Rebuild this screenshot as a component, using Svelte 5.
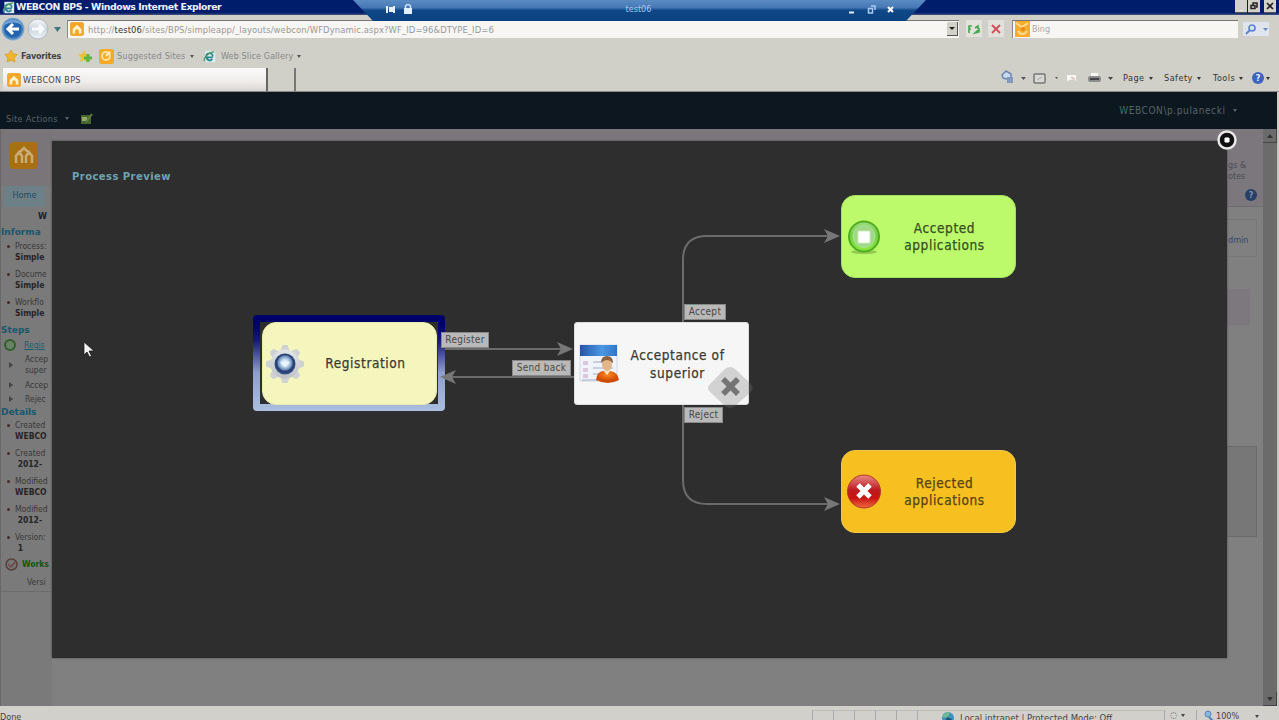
<script>
  const nodes = [
    { id: 'registration', lines: ['Registration'], x: 210, y: 181, type: 'start' },
    { id: 'acceptance', lines: ['Acceptance of', 'superior'], x: 522, y: 181, type: 'task' },
    { id: 'accepted', lines: ['Accepted', 'applications'], x: 789, y: 54, type: 'accepted' },
    { id: 'rejected', lines: ['Rejected', 'applications'], x: 789, y: 309, type: 'rejected' }
  ];

  const edges = [
    'M393 208H512',
    'M522 236H400',
    'M631 181V119Q631 95 655 95H778',
    'M631 264V339Q631 363 655 363H778'
  ];

  const arrows = [
    { x: 520, y: 208, angle: 0 },
    { x: 389, y: 236, angle: 180 },
    { x: 787, y: 95, angle: 0 },
    { x: 787, y: 363, angle: 0 }
  ];

  const labels = [
    { text: 'Register', x: 389, y: 191, w: 48 },
    { text: 'Send back', x: 460, y: 219, w: 59 },
    { text: 'Accept', x: 632, y: 163, w: 42 },
    { text: 'Reject', x: 632, y: 266, w: 39 }
  ];

  const information = [
    ['Process:', 'Simple'],
    ['Docume', 'Simple'],
    ['Workflo', 'Simple']
  ];

  const details = [
    ['Created', 'WEBCO'],
    ['Created', '\u00a02012-'],
    ['Modified', 'WEBCO'],
    ['Modified', '\u00a02012-'],
    ['Version:', '\u00a01']
  ];
</script>

{#snippet feed(size)}
  <svg width={size} height={size} viewBox="0 0 16 16">
    <rect x="0.5" y="0.5" width="15" height="15" rx="2" fill="#f5a623" stroke="#e8a53c" />
    <path d="M3 13V8l5-5 5 5v5h-3V9.500L8 8 6 9.500V13z" fill="#fff0cc" />
  </svg>
{/snippet}

{#snippet ie(size)}
  <svg width={size} height={size} viewBox="0 0 16 16">
    <rect x="3" y="1" width="12" height="14" fill="#dcebee" />
    <path d="M12 9H5a3.500 3.500 0 0 0 6.500 2M12 8a4 4 0 0 0-8 0c0 5 5 6 7 4" fill="none" stroke="#2b8792" stroke-width="2" />
    <path d="M2 14C0 10 6 3 14 2" fill="none" stroke="#4c9a62" stroke-width="1.500" />
  </svg>
{/snippet}

<div class="window">
  <header class="titlebar">
    {@render ie(13)}
    <span class="title">WEBCON BPS - Windows Internet Explorer</span>
    <div class="window-buttons">
      <i>_</i>
      <i><svg width="8" height="8" viewBox="0 0 8 8"><path d="M3 3V1h4v4H6M1 3.500h4v3H1z" fill="none" stroke="#222" stroke-width="1.500" /></svg></i>
      <i><svg width="8" height="8" viewBox="0 0 8 8"><path d="M1 1l6 6M7 1L1 7" stroke="#222" stroke-width="1.700" /></svg></i>
    </div>
  </header>

  <div class="remote-bar">
    <svg class="pin" width="36" height="14" viewBox="0 0 36 14">
      <path d="M5 4v7M8 6h3v3H8zM12 4v7" fill="#fff" stroke="#e4efff" stroke-width="2" />
      <rect x="22" y="6" width="8" height="6" fill="#e2efff" />
      <path d="M23.500 6V4q2.500-3 5 0v2" fill="none" stroke="#cfe2fa" stroke-width="1.500" />
    </svg>
    <span>test06</span>
    <svg class="remote-controls" width="50" height="14" viewBox="0 0 50 14">
      <path d="M3 10.500h5" stroke="#e4efff" stroke-width="2" />
      <path d="M25 4h4v4M22.500 6.500h4V11h-4z" fill="none" stroke="#a9caf0" stroke-width="1.500" />
      <path d="M42 5l5 5M47 5l-5 5" stroke="#fff" stroke-width="2" />
    </svg>
  </div>

  <div class="address-row">
    <svg class="nav" width="66" height="26" viewBox="0 0 66 26">
      <defs>
        <radialGradient id="back"><stop offset="0" stop-color="#1a65b5" /><stop offset=".7" stop-color="#2365ac" /><stop offset="1" stop-color="#8fb5d9" /></radialGradient>
        <linearGradient id="forward" x2="0" y2="1"><stop stop-color="#f7f9fb" /><stop offset=".5" stop-color="#ccd5df" /><stop offset="1" stop-color="#eef4f8" /></linearGradient>
      </defs>
      <circle cx="13" cy="13" r="11.500" fill="url(#back)" />
      <path d="M4 9a10 9 0 0 1 18 0q-8-5-18 0z" fill="#8fbbe2" opacity=".7" />
      <path d="M13 8l-5 5 5 5M8 13h11" fill="none" stroke="#fff" stroke-width="3" />
      <circle cx="38" cy="13" r="10" fill="url(#forward)" stroke="#b4bac2" />
      <path d="M32 13h11M39 9l4 4-4 4" fill="none" stroke="#f8fafb" stroke-width="3" />
      <path d="M54 11h7l-3.500 5z" fill="#417783" />
    </svg>
    <div class="url">
      {@render feed(14)}
      <span class="url-text">http://<b>test06</b>/sites/BPS/simpleapp/_layouts/webcon/WFDynamic.aspx?WF_ID=96&amp;DTYPE_ID=6</span>
      <i class="dropdown"></i>
    </div>
    <div class="tool-button">
      <svg width="14" height="12" viewBox="0 0 14 12"><path d="M2 10V3h3M2 6h2M8 5l3-2v3M12 5v4l-4 1 3-3" fill="none" stroke="#43a84c" stroke-width="1.600" /></svg>
    </div>
    <div class="tool-button stop">
      <svg width="12" height="12" viewBox="0 0 12 12"><path d="M2 2l8 8M10 2l-8 8" stroke="#d54b58" stroke-width="1.800" /></svg>
    </div>
    <div class="search">
      <svg width="15" height="16" viewBox="0 0 15 16"><rect width="15" height="16" fill="#f7ac2c" /><path d="M1 2l6 4 6-4M3 10c2 4 7 4 9 0" fill="none" stroke="#ffdb90" stroke-width="2" /><circle cx="8" cy="8" r="2" fill="#f08513" /></svg>
      <span>Bing</span>
    </div>
    <div class="search-go">
      <svg width="26" height="14" viewBox="0 0 26 14"><circle cx="9" cy="6" r="3" fill="none" stroke="#5c83cf" stroke-width="1.700" /><path d="M7 8l-4 4" stroke="#5c83cf" stroke-width="2" /><path d="M20 6h5l-2.500 3z" fill="#6a86c4" /></svg>
    </div>
  </div>

  <div class="favorites">
    <svg width="14" height="14" viewBox="0 0 14 14"><path d="M7 1l2 4 4 .5-3 3.500 1 4-4-2-4 2 1-4-3-3.500L5 5z" fill="#f3b52d" stroke="#e0a12b" /></svg>
    <strong>Favorites</strong>
    <svg class="add" width="14" height="14" viewBox="0 0 14 14"><path d="M6 1l2 4 4 .5-3 3.500v4L6 11l-4 2 1-4-3-3.500L4 5z" fill="#e9c33c" /><path d="M10 5v8M6 9h8" stroke="#5fb340" stroke-width="3" /></svg>
    <svg class="suggested" width="15" height="15" viewBox="0 0 15 15"><rect width="15" height="15" rx="2" fill="#f7a927" /><circle cx="7" cy="7" r="4" fill="none" stroke="#ffe19c" stroke-width="2" /><path d="M7 7l4-4" stroke="#fff1cc" stroke-width="2" /></svg>
    <span class="suggested-text">Suggested Sites</span>
    <i class="caret"></i>
    <span class="slice-icon">{@render ie(13)}</span>
    <span class="slice-text">Web Slice Gallery</span>
    <i class="caret"></i>
  </div>

  <div class="tab-row">
    <div class="tab">{@render feed(14)}<span>WEBCON BPS</span></div>
    <div class="new-tab"></div>
    <div class="commands">
      <svg width="116" height="18" viewBox="0 0 116 18">
        <path d="M1 6l4-4 5 3v8l-4-3-4-1z" fill="#cad9ef" stroke="#6c88b5" stroke-width="1.500" /><path d="M6 8h6v6H6z" fill="#8298bd" />
        <path d="M20 8h5l-2.500 3zM54 8h3l-1.500 2z" fill="#555" />
        <rect x="33" y="5" width="11" height="9" rx="1" fill="#d8d8d4" stroke="#777" stroke-width="1.500" /><path d="M36 11l5-3" stroke="#aaa" />
        <path d="M66 6h9v6l-3-2-6 2z" fill="#f7f5ef" /><path d="M70 8l4 2" stroke="#c8ad99" />
        <path d="M90 4h7v4h-7z" fill="#f8f8f5" /><rect x="87" y="7" width="13" height="6" rx="2" fill="#8b8e8d" /><path d="M89 10h9" stroke="#444" stroke-width="2" />
        <path d="M107 8h5l-2.500 3z" fill="#444" />
      </svg>
      <span class="page-menu">Page <i class="caret"></i></span>
      <span class="safety-menu">Safety <i class="caret"></i></span>
      <span class="tools-menu">Tools <i class="caret"></i></span>
      <i class="help">?</i><i class="caret help-caret"></i>
    </div>
  </div>

  <div class="ribbon">
    <span class="site-actions">Site Actions <i class="caret"></i></span>
    <svg class="edit" width="13" height="12" viewBox="0 0 13 12"><path d="M1 2h10v9H1z" fill="#46652e" /><path d="M2 4h5v4H2z" fill="#96a96d" /><path d="M6 9l6-8" stroke="#62803b" stroke-width="2" /></svg>
    <span class="user">WEBCON\p.pulanecki <i class="caret"></i></span>
  </div>

  <div class="page">
    <aside>
      <div class="site-logo">
        <svg width="28" height="27" viewBox="0 0 28 27"><rect width="28" height="27" rx="4" fill="#a96f13" /><path d="M6 21v-7l3-4 3 4v7M16 21v-7l3-4 3 4v7M10 10l4-4 4 4" fill="none" stroke="#c8ad74" stroke-width="2.500" /></svg>
      </div>
      <div class="home">Home</div>
      <div class="wf">W</div>
      <h3>Informa</h3>
      <ul>
        {#each information as [name, value]}
          <li>{name}<b>{value}</b></li>
        {/each}
      </ul>
      <h3>Steps</h3>
      <div class="steps">
        <div class="step current"><i></i><span>Regis</span></div>
        <div class="step two-line"><i></i><span>Accep<br />super</span></div>
        <div class="step"><i></i><span>Accep</span></div>
        <div class="step"><i></i><span>Rejec</span></div>
      </div>
      <h3>Details</h3>
      <ul>
        {#each details as [name, value]}
          <li>{name}<b>{value}</b></li>
        {/each}
      </ul>
      <div class="history">
        <svg width="13" height="13" viewBox="0 0 13 13"><circle cx="6.500" cy="6.500" r="5.500" fill="#777" stroke="#583f3d" stroke-width="1.500" /><path d="M3 6l3 3 4-5" fill="none" stroke="#6b4744" stroke-width="1.500" /></svg>
        <b>Works</b>
      </div>
      <div class="version">Versi</div>
    </aside>
    <main>
      <div class="page-top">
        <span>gs &amp;<br />otes</span>
        <i class="help">?</i>
      </div>
      <div class="side-panel admin">dmin</div>
      <div class="side-panel pale"></div>
      <div class="side-panel bottom-panel"></div>
    </main>
    <div class="scrollbar"><i class="up"></i><i class="down"></i></div>
  </div>

  <footer>
    <span class="done">Done</span>
    {#each Array(5) as _}<i class="cell"></i>{/each}
    <div class="zone">
      <svg width="14" height="14" viewBox="0 0 14 14"><circle cx="7" cy="7" r="6" fill="#3b94be" /><path d="M1 6q5-7 8-4L6 7z" fill="#70b995" /><path d="M6 6l5 2-2 5-5-3z" fill="#235777" /></svg>
      <span>Local intranet | Protected Mode: Off</span>
    </div>
    <div class="status-tool">◌ <i class="caret"></i></div>
    <div class="zoom">
      <svg width="12" height="12" viewBox="0 0 12 12"><circle cx="6" cy="4" r="3" fill="#8ab6e3" stroke="#5484bd" /><path d="M7 7l4 4" stroke="#5484bd" stroke-width="2" /></svg>
      <span>100%</span><i class="caret"></i>
    </div>
  </footer>

  <div class="modal">
    <h2>Process Preview</h2>
    <div class="selection"></div>
    <svg class="edges" width="1175" height="517" viewBox="0 0 1175 517">
      {#each edges as d}
        <path {d} fill="none" stroke="#6b6b6b" stroke-width="2" />
      {/each}
      {#each arrows as a}
        <path d="M1 0L-15-7l4 7-4 7z" fill="#777" transform="translate({a.x} {a.y}) rotate({a.angle})" />
      {/each}
    </svg>

    {#each nodes as node (node.id)}
      <div class="node {node.type}" style:left="{node.x}px" style:top="{node.y}px">
        <div class="node-icon">
          {#if node.type === 'start'}
            <svg width="42" height="42" viewBox="0 0 42 42">
              <defs>
                <linearGradient id="gear" x2="0" y2="1"><stop stop-color="#e2e4e6" /><stop offset="1" stop-color="#bfc2c5" /></linearGradient>
                <radialGradient id="hub" cy=".45"><stop offset="0" stop-color="#fff" /><stop offset=".35" stop-color="#c5dcf0" /><stop offset=".65" stop-color="#7090bd" /><stop offset=".8" stop-color="#223c70" /><stop offset="1" stop-color="#354f83" /></radialGradient>
              </defs>
              {#each [0, 45, 90, 135] as angle}
                <path d="M18.500 2h5l3 8v22l-3 8h-5l-3-8V10z" fill="#cfd2d5" transform="rotate({angle} 21 21)" />
              {/each}
              <circle cx="21" cy="21" r="14.500" fill="url(#gear)" />
              <circle cx="21" cy="21" r="10.500" fill="url(#hub)" />
              <path d="M16 19h10l-5 5z" fill="#edf6ff" />
            </svg>
          {:else if node.type === 'task'}
            <svg width="42" height="42" viewBox="0 0 42 42">
              <defs>
                <linearGradient id="bar" x2="1"><stop stop-color="#2455a5" /><stop offset=".6" stop-color="#4d97e4" /><stop offset="1" stop-color="#2f75c6" /></linearGradient>
                <radialGradient id="body" cy=".3"><stop stop-color="#ff8b24" /><stop offset="1" stop-color="#cf4b05" /></radialGradient>
              </defs>
              <rect x="1" y="2" width="37" height="36" fill="#f0f3fa" stroke="#d1d7e3" />
              <rect x="1" y="2" width="37" height="11" fill="url(#bar)" />
              <path d="M14 19h20M14 25h20M14 31h20M3 37h18" stroke="#b9c4d7" stroke-width="1.500" />
              <path d="M4 18h5v4H4zM4 25h5v4H4zM4 31h5v4H4z" fill="#dcc7df" />
              <path d="M17 37q1-9 8-9h6q8 1 9 9-11 6-23 0z" fill="url(#body)" />
              <path d="M24 27l4 5 4-5" fill="#fae5ca" />
              <ellipse cx="28" cy="21" rx="5" ry="7" fill="#e5b58a" />
              <path d="M22 20q0-7 6-7t6 7q-3-3-6-3t-6 3z" fill="#8c6342" />
            </svg>
          {:else if node.type === 'accepted'}
            <svg width="42" height="42" viewBox="0 0 42 42">
              <defs><linearGradient id="green" x2="0" y2="1"><stop stop-color="#9bd982" /><stop offset=".5" stop-color="#75cf44" /><stop offset="1" stop-color="#8beb3d" /></linearGradient></defs>
              <ellipse cx="22" cy="36" rx="13" ry="2" fill="#93c953" />
              <circle cx="22" cy="20.500" r="15" fill="url(#green)" stroke="#51ad20" stroke-width="2" />
              <circle cx="22" cy="20.500" r="11" fill="#a0d78a" stroke="#a6e984" stroke-width="1" />
              <rect x="16" y="15" width="12" height="12" rx="1" fill="#fff" stroke="#c8f1b7" />
            </svg>
          {:else}
            <svg width="42" height="42" viewBox="0 0 42 42">
              <defs><linearGradient id="red" x2="0" y2="1"><stop stop-color="#e88a87" /><stop offset=".45" stop-color="#bd1c20" /><stop offset=".7" stop-color="#c81512" /><stop offset="1" stop-color="#f16b42" /></linearGradient></defs>
              <circle cx="22" cy="20.500" r="16.500" fill="url(#red)" stroke="#b7352a" />
              <path d="M16 14l12 12M28 14L16 26" stroke="#fff" stroke-width="5" />
            </svg>
          {/if}
        </div>
        <div class="node-text">
          {#each node.lines as line}<div>{line}</div>{/each}
        </div>
        {#if node.type === 'task'}
          <svg class="delete" width="46" height="46" viewBox="0 0 46 46">
            <path d="M17 4q5-4 10 0l15 14q5 5 0 10L27 41q-5 4-10 0L2 27q-4-4 0-8z" fill="#777" opacity=".28" />
            <path d="M17 16l11 11M28 16L17 27" stroke="#747474" stroke-width="5.500" stroke-linecap="square" />
          </svg>
        {/if}
      </div>
    {/each}

    {#each labels as label}
      <span class="edge-label" style:left="{label.x}px" style:top="{label.y}px" style:width="{label.w}px">{label.text}</span>
    {/each}

    <svg class="close" width="22" height="22" viewBox="0 0 22 22">
      <circle cx="11" cy="11" r="8.500" fill="#111" stroke="#e8e8e8" stroke-width="2.500" />
      <path d="M9 9l4 4M13 9l-4 4" stroke="#fff" stroke-width="3" />
    </svg>
  </div>

  <svg class="cursor" width="14" height="18" viewBox="0 0 14 18">
    <path d="M1 1v13l3-3 2.500 5 2-1L6 10h5z" fill="#f3f3f3" stroke="#111" stroke-width=".7" />
  </svg>
</div>

<style>
  :global(body) {
    overflow: hidden;
  }

  .window {
    position: relative;
    display: flex;
    flex-direction: column;
    width: 1279px;
    height: 720px;
    overflow: hidden;
    background: #d0d0c8;
    font-family: "DejaVu Sans Condensed", "DejaVu Sans", sans-serif;
    font-stretch: condensed;
    font-size: 9px;
    color: #222;
  }

  .window :global(svg) {
    display: block;
    flex: none;
  }

  i {
    font-style: normal;
  }

  .caret {
    display: inline-block;
    flex: none;
    margin-left: 4px;
    border: 2.5px solid transparent;
    border-top: 3px solid currentColor;
    border-bottom: 0;
    vertical-align: 2px;
  }

  .titlebar {
    display: flex;
    align-items: center;
    flex: none;
    box-sizing: border-box;
    height: 15px;
    padding-left: 2px;
    background: linear-gradient(#001d6b 85%, #47567c);
    color: #eef2ff;
  }

  .title {
    margin: -3px 0 0 1px;
    font-family: "DejaVu Sans", sans-serif;
    font-stretch: normal;
    font-size: 9.4px;
    font-weight: bold;
    letter-spacing: -0.46px;
    white-space: nowrap;
  }

  .window-buttons {
    display: flex;
    gap: 1px;
    margin: -3px 3px 0 auto;
  }

  .window-buttons i {
    display: flex;
    align-items: center;
    justify-content: center;
    width: 12px;
    height: 12px;
    border-bottom: 1px solid #555;
    background: #d3d1c8;
    line-height: 6px;
  }

  .window-buttons i:last-child {
    margin-left: 3px;
  }

  .remote-bar {
    position: absolute;
    z-index: 2;
    top: 0;
    left: 353px;
    display: flex;
    align-items: center;
    justify-content: space-between;
    width: 573px;
    height: 21px;
    background: linear-gradient(#5b8bc2 0, #4679b6 35%, #104786 50%, #0a4382);
    clip-path: polygon(0 0, 100% 0, 96.5% 100%, 3.5% 100%);
    color: #a8c8ef;
    font-size: 9px;
  }

  .remote-bar span {
    margin: -3px 0 0 13px;
  }

  .pin {
    margin: -4px 0 0 29px;
  }

  .remote-controls {
    margin: -3px 30px 0 0;
  }

  .address-row {
    display: flex;
    align-items: center;
    flex: none;
    height: 29px;
  }

  .nav {
    margin-top: -1px;
  }

  .url,
  .search {
    display: flex;
    align-items: center;
    box-sizing: border-box;
    height: 18px;
    margin-top: -2px;
    border-top: 1px solid #777;
    border-left: 1px solid #888;
    background: #f7f6f3;
    color: #999;
  }

  .url {
    width: 892px;
    margin-left: 1px;
    padding: 0 1px 0 2px;
  }

  .url-text {
    margin-left: 4px;
    font-size: 9.35px;
    letter-spacing: 0.11px;
    white-space: nowrap;
  }

  .url b {
    color: #333;
    font-weight: normal;
  }

  .dropdown {
    position: relative;
    width: 10px;
    height: 13px;
    margin-left: auto;
    border-right: 1px solid #555;
    border-bottom: 1px solid #555;
    background: #d4d1c8;
  }

  .dropdown::after {
    content: '';
    display: block;
    width: 0;
    margin: 5px auto 0;
    border: 3px solid transparent;
    border-top-color: #222;
  }

  .tool-button {
    display: flex;
    align-items: center;
    justify-content: center;
    width: 16px;
    height: 17px;
    margin-left: 7px;
    margin-top: -2px;
    background: #e2e1dc;
  }

  .stop {
    margin-left: 6px;
  }

  .search {
    width: 226px;
    margin-left: 8px;
    padding-left: 2px;
    color: #aaa;
  }

  .search span {
    margin-left: 2px;
  }

  .search-go {
    margin: -2px 0 0 5px;
    background: #e0e4ed;
  }

  .favorites {
    display: flex;
    align-items: center;
    flex: none;
    height: 24px;
    padding-left: 4px;
    color: #888;
    white-space: nowrap;
  }

  .favorites .caret {
    color: #555;
  }

  .favorites strong {
    width: 57px;
    margin-left: 3px;
    color: #444;
    font-size: 9px;
    letter-spacing: -0.25px;
  }

  .suggested {
    margin-left: 7px;
  }

  .suggested-text {
    width: 69px;
    margin-left: 3px;
    letter-spacing: 0.2px;
  }

  .slice-icon {
    margin-left: 9px;
  }

  .slice-text {
    width: 72px;
    margin-left: 5px;
    letter-spacing: 0.1px;
  }

  .tab-row {
    display: flex;
    flex: none;
    box-sizing: border-box;
    height: 24px;
    border-bottom: 1px solid #888;
  }

  .tab {
    display: flex;
    align-items: center;
    box-sizing: border-box;
    width: 265px;
    margin-left: 3px;
    padding-left: 4px;
    border-right: 2px solid #666;
    background: linear-gradient(#fbfaf9, #f0edeb 60%, #d8d4d2);
    color: #444;
  }

  .tab span {
    margin-left: 2px;
    letter-spacing: 0.3px;
  }

  .new-tab {
    width: 26px;
    border-right: 2px solid #777;
  }

  .commands {
    display: flex;
    align-items: center;
    margin: -3px 9px 0 auto;
    color: #333;
    white-space: nowrap;
  }

  .commands span {
    display: flex;
    align-items: center;
    letter-spacing: 0.5px;
  }

  .page-menu {
    width: 41px;
    margin-left: 6px;
  }

  .safety-menu {
    width: 49px;
  }

  .tools-menu {
    width: 39px;
  }

  .help {
    display: flex;
    align-items: center;
    justify-content: center;
    width: 12px;
    height: 12px;
    border-radius: 50%;
    background: #3f62bd;
    color: #e8f1ff;
    font-weight: bold;
  }

  .help-caret {
    margin-left: 2px;
  }

  .ribbon {
    display: flex;
    align-items: center;
    flex: none;
    box-sizing: border-box;
    height: 37px;
    margin-right: 2px;
    padding: 17px 40px 0 6px;
    background: #0d171f;
    color: #59636a;
  }

  .site-actions {
    width: 74px;
    letter-spacing: 0.35px;
    white-space: nowrap;
  }

  .user {
    margin: -17px 0 0 auto;
    font-size: 10px;
    letter-spacing: 0.6px;
  }

  .page {
    display: flex;
    flex: none;
    height: 577px;
    border-right: 2px solid #c4c4c0;
    background: #808080;
  }

  aside {
    box-sizing: border-box;
    width: 52px;
    overflow: hidden;
    border-left: 1px solid #686868;
    background: #7a7a7a;
    color: #383838;
    font-size: 8.5px;
    line-height: 11px;
    white-space: nowrap;
  }

  .site-logo {
    height: 44px;
    padding: 13px 0 0 9px;
    background: #797579;
  }

  .home {
    width: 41px;
    height: 21px;
    margin-left: 3px;
    background: #6d8088;
    color: #234d61;
    font-size: 9px;
    line-height: 19px;
    text-align: center;
  }

  .wf {
    height: 18px;
    padding-left: 37px;
    color: #222;
    font-size: 9px;
    font-weight: bold;
    line-height: 19px;
  }

  h3 {
    margin: 0;
    color: #18576c;
    font-family: "DejaVu Sans", sans-serif;
    font-stretch: normal;
    font-size: 9px;
    line-height: 15px;
  }

  ul {
    height: 82px;
    margin: 0;
    padding: 1px 0 0 14px;
    list-style: none;
  }

  h3:last-of-type {
    line-height: 14px;
  }

  ul:last-of-type {
    height: 138px;
  }

  li {
    position: relative;
    height: 28px;
  }

  li::before {
    content: '';
    position: absolute;
    top: 4px;
    left: -8px;
    width: 3px;
    height: 3px;
    border-radius: 50%;
    background: #4a2929;
  }

  li b {
    display: block;
    color: #252525;
    font-size: 8.5px;
    letter-spacing: 0;
  }

  .steps {
    height: 67px;
  }

  .step {
    display: flex;
    align-items: center;
    height: 14px;
  }

  .two-line {
    height: 26px;
  }

  .step i {
    flex: none;
    width: 0;
    margin: 0 12px 0 8px;
    border: 3px solid transparent;
    border-left: 4px solid #444;
    border-right: 0;
  }

  .current i {
    box-sizing: border-box;
    width: 12px;
    height: 12px;
    margin: 0 8px 0 3px;
    border: 2px solid #315e2c;
    border-radius: 50%;
    background: #6a8365;
  }

  .current {
    color: #245d71;
    text-decoration: underline;
  }

  .history {
    display: flex;
    align-items: center;
    gap: 4px;
    height: 13px;
    margin: 0 0 0 4px;
    color: #0d590f;
  }

  .version {
    height: 21px;
    padding: 6px 0 0 26px;
    box-sizing: border-box;
    border-bottom: 1px solid #6c6c6c;
  }

  main {
    display: flex;
    flex: 1;
    flex-direction: column;
    align-items: flex-end;
  }

  .page-top {
    box-sizing: border-box;
    width: 100%;
    height: 78px;
    padding: 31px 6px 0 0;
    border-bottom: 1px solid #6e6e6e;
    background: #7b777d;
    color: #4c4b52;
    font-size: 9px;
    line-height: 11px;
  }

  .page-top span {
    display: block;
    width: 29px;
    margin-left: auto;
  }

  .page-top .help {
    margin: 7px 0 0 auto;
    background: #263f68;
    color: #8291aa;
  }

  .side-panel {
    box-sizing: border-box;
    width: 42px;
    margin-right: 6px;
  }

  .admin {
    height: 38px;
    margin-top: 12px;
    padding-left: 12px;
    border: 1px solid #777;
    color: #34466d;
    line-height: 40px;
  }

  .pale {
    width: 34px;
    height: 36px;
    margin: 32px 13px 0 0;
    background: #7d787e;
  }

  .bottom-panel {
    height: 91px;
    margin-top: 121px;
    border: 1px solid #6a6a6a;
    background: #777;
  }

  .scrollbar {
    display: flex;
    flex-direction: column;
    justify-content: space-between;
    width: 14px;
    background: #6b6b6b;
  }

  .scrollbar i {
    display: flex;
    align-items: center;
    justify-content: center;
    box-sizing: border-box;
    height: 14px;
    border-right: 1px solid #444;
    border-bottom: 1px solid #444;
  }

  .scrollbar i::after {
    content: '';
    border: 3px solid transparent;
    border-bottom: 4px solid #333;
    border-top: 0;
  }

  .scrollbar .down::after {
    transform: rotate(180deg);
  }

  footer {
    display: flex;
    align-items: flex-start;
    flex: none;
    height: 14px;
    overflow: hidden;
    background: #d2d0ca;
    color: #444;
    white-space: nowrap;
  }

  .done {
    width: 812px;
    padding-top: 6px;
  }

  .cell {
    width: 20px;
    height: 12px;
    margin-top: 4px;
    border-left: 1px solid #aaa;
    box-shadow: inset 0 1px #bbb;
  }

  .zone {
    display: flex;
    gap: 5px;
    box-sizing: border-box;
    width: 247px;
    margin-top: 4px;
    padding-left: 23px;
    border-top: 1px solid #bbb;
    border-left: 1px solid #aaa;
  }

  .zone span {
    padding-top: 1px;
    font-size: 9.5px;
  }

  .status-tool,
  .zoom {
    display: flex;
    align-items: center;
    margin-top: 4px;
    padding-left: 5px;
    border-left: 1px solid #aaa;
  }

  .status-tool {
    width: 26px;
  }

  .zoom span {
    width: 35px;
    margin-left: 2px;
  }

  .modal {
    position: absolute;
    top: 141px;
    left: 52px;
    box-sizing: border-box;
    width: 1175px;
    height: 517px;
    background: #2e2e2e;
    box-shadow: 0 0 2px #454545;
  }

  h2 {
    margin: 0;
    padding: 30px 0 0 20px;
    color: #6fa3b2;
    font-family: "DejaVu Sans", sans-serif;
    font-stretch: normal;
    font-size: 10px;
    letter-spacing: 0.45px;
    line-height: 12px;
  }

  .selection {
    position: absolute;
    top: 174px;
    left: 201px;
    width: 192px;
    height: 96px;
    border-radius: 4px;
    background: linear-gradient(#00006a 10%, #171a75 27%, #8d9fca 60%, #aabfdf);
  }

  .selection::after {
    content: '';
    position: absolute;
    inset: 7px;
    background: #2e2e2e;
  }

  .edges {
    position: absolute;
    top: 0;
    left: 0;
  }

  .node {
    position: absolute;
    display: flex;
    align-items: center;
    box-sizing: border-box;
    width: 175px;
    height: 83px;
    border: 1px solid transparent;
    border-radius: 14px;
    color: #3b3b37;
    font-size: 13.5px;
    letter-spacing: 0.6px;
    line-height: 17px;
  }

  .node-icon {
    flex: none;
    width: 42px;
    margin-left: 1px;
  }

  .node-text {
    width: 117px;
    margin-left: 1px;
    text-align: center;
    white-space: nowrap;
    -webkit-text-stroke: 0.25px currentColor;
  }

  .start {
    border-color: #e8ebb0;
    background: #f5f6bd;
  }

  .task {
    border-color: #ddd;
    border-radius: 3px;
    background: #f6f6f6;
  }

  .accepted {
    border-color: #a3e15d;
    background: #bcfa6c;
    color: #365020;
  }

  .rejected {
    border-color: #f1c84a;
    background: #f6c020;
    color: #574312;
  }

  .accepted .node-icon,
  .rejected .node-icon {
    margin: 0 1px 0 0;
  }

  .task .node-icon {
    margin: 0 -3px 0 4px;
  }

  .task .node-text {
    line-height: 18px;
  }

  .delete {
    position: absolute;
    top: 42px;
    left: 133px;
  }

  .edge-label {
    position: absolute;
    box-sizing: border-box;
    height: 16px;
    border: 1px solid #888;
    background: #b9b9b9;
    color: #484848;
    font-size: 10px;
    letter-spacing: 0.3px;
    line-height: 14px;
    text-align: center;
    white-space: nowrap;
  }

  .close {
    position: absolute;
    top: -12px;
    left: 1164px;
  }

  .cursor {
    position: absolute;
    top: 341px;
    left: 83px;
  }
</style>
